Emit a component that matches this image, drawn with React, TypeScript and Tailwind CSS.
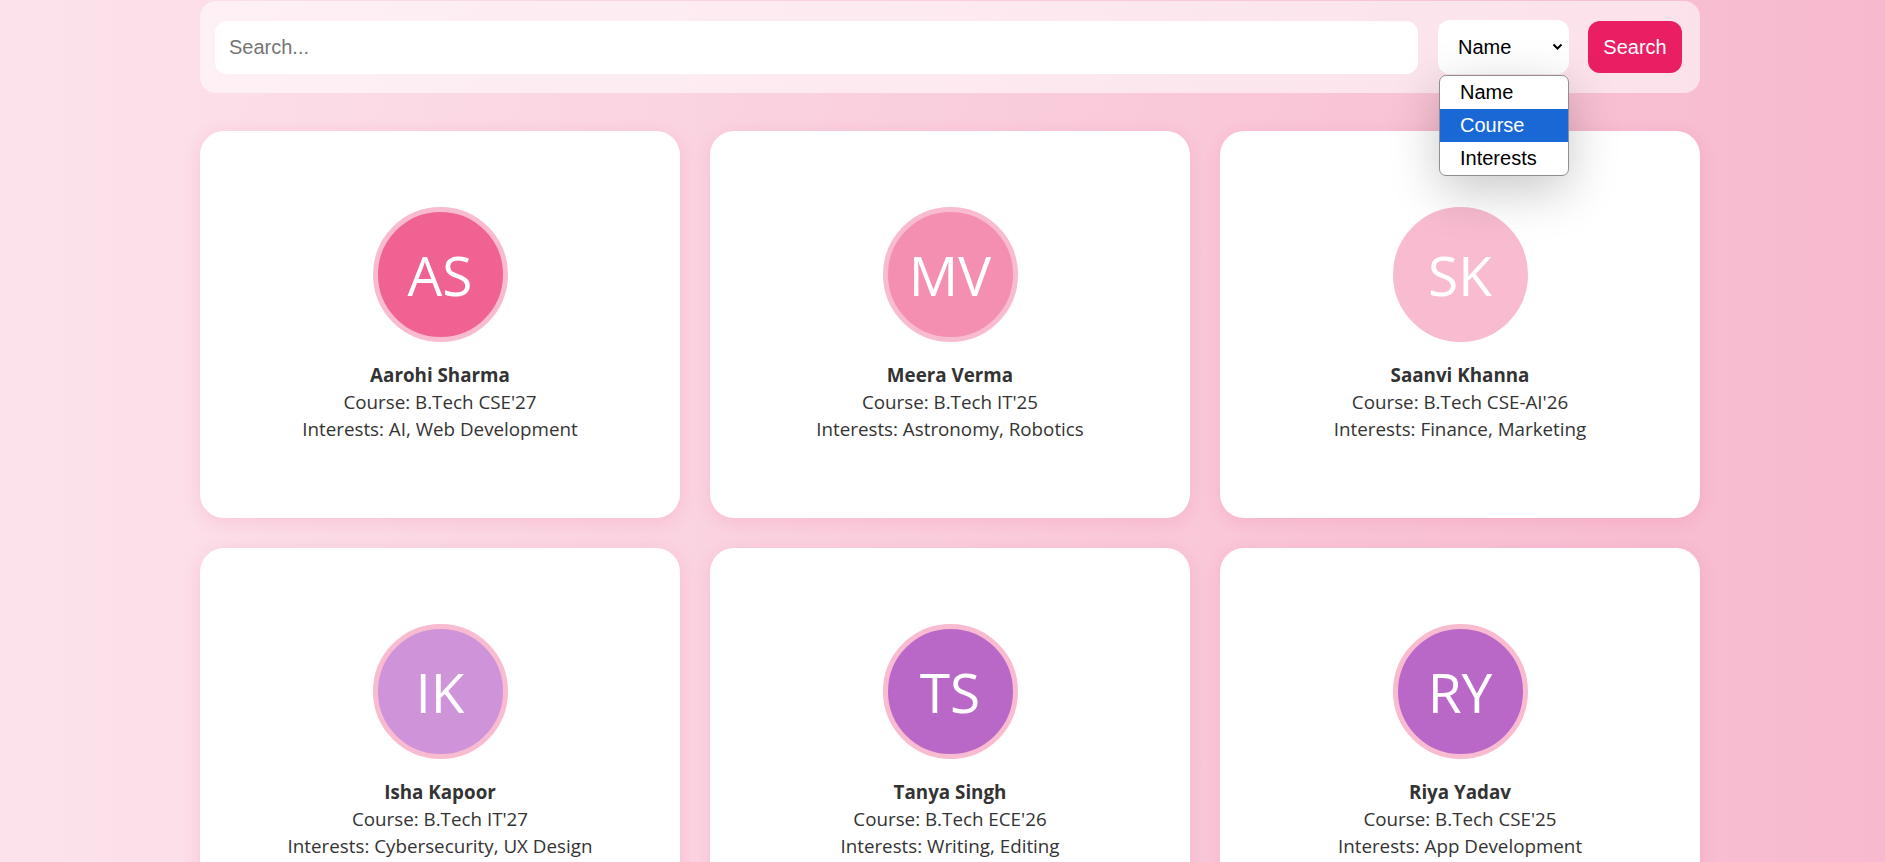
import { useState } from 'react';

type Student = {
  initials: string;
  name: string;
  course: string;
  interests: string;
  color: string;
};

const students: Student[] = [
  { initials: 'AS', name: 'Aarohi Sharma', course: "B.Tech CSE'27", interests: 'AI, Web Development', color: 'bg-[#f06292]' },
  { initials: 'MV', name: 'Meera Verma', course: "B.Tech IT'25", interests: 'Astronomy, Robotics', color: 'bg-[#f48fb1]' },
  { initials: 'SK', name: 'Saanvi Khanna', course: "B.Tech CSE-AI'26", interests: 'Finance, Marketing', color: 'bg-[#f8bbd0]' },
  { initials: 'IK', name: 'Isha Kapoor', course: "B.Tech IT'27", interests: 'Cybersecurity, UX Design', color: 'bg-[#ce93d8]' },
  { initials: 'TS', name: 'Tanya Singh', course: "B.Tech ECE'26", interests: 'Writing, Editing', color: 'bg-[#ba68c8]' },
  { initials: 'RY', name: 'Riya Yadav', course: "B.Tech CSE'25", interests: 'App Development', color: 'bg-[#ba68c8]' },
];

const options = ['Name', 'Course', 'Interests'];

const StudentCard = ({ s }: { s: Student }) => (
  <div className="flex flex-col items-center rounded-[24px] bg-white pt-[76px] pb-[75px] shadow-[0_4px_18px_rgba(233,30,99,0.12)]">
    <div
      className={`flex h-[135px] w-[135px] items-center justify-center rounded-full border-[5px] border-[#f8bbd0] ${s.color} text-[55px] leading-none text-white`}
    >
      {s.initials}
    </div>
    <div className="mt-[20px] text-center text-[18.8px] leading-[27px] text-[#333]">
      <p className="font-bold">{s.name}</p>
      <p>Course: {s.course}</p>
      <p>Interests: {s.interests}</p>
    </div>
  </div>
);

export default function App() {
  const [filter] = useState('Name');
  const [hovered, setHovered] = useState('Course');

  return (
    <div className="min-h-screen bg-linear-to-r from-[#fce3eb] to-[#f7b9ce] pt-px font-['Open_Sans',sans-serif]">
      <div className="mx-auto w-[1515px] pl-[15px]">
        {/* Search bar */}
        <div className="relative z-10 flex items-center gap-[20px] rounded-[16px] bg-white/55 py-[19px] pl-[15px] pr-[18px] font-['Liberation_Sans',Arial,sans-serif] text-[20px]">
          <input
            type="text"
            placeholder="Search..."
            className="h-[53px] flex-1 rounded-[12px] bg-white px-[14px] text-black placeholder:text-[#757575] outline-none"
          />
          <div className="relative">
            <select
              value={filter}
              onChange={() => {}}
              className="h-[54px] w-[131px] appearance-none rounded-[12px] bg-white pl-[20px] text-black outline-none"
            >
              {options.map((o) => (
                <option key={o}>{o}</option>
              ))}
            </select>
            <svg
              className="pointer-events-none absolute right-[6px] top-[23px]"
              width="11"
              height="8"
              viewBox="0 0 11 8"
            >
              <path d="M1.5 1.5 L5.5 5.5 L9.5 1.5" fill="none" stroke="#000" strokeWidth="2" />
            </svg>
            {/* open dropdown list */}
            <ul className="absolute left-[1px] top-[55px] w-[130px] overflow-hidden rounded-[7px] border border-[#8f8f8f] bg-white shadow-[0_14px_50px_rgba(0,0,0,0.22)]">
              {options.map((o) => (
                <li
                  key={o}
                  onMouseEnter={() => setHovered(o)}
                  className={`h-[33px] pl-[20px] leading-[33px] ${
                    hovered === o ? 'bg-[#1a67d6] text-white' : 'text-black'
                  }`}
                >
                  {o}
                </li>
              ))}
            </ul>
          </div>
          <button className="-ml-[1px] h-[52px] w-[94px] rounded-[12px] bg-[#e91e63] text-white">Search</button>
        </div>

        {/* Cards */}
        <div className="mt-[38px] grid grid-cols-3 gap-[30px] pb-[40px]">
          {students.map((s) => (
            <StudentCard key={s.name} s={s} />
          ))}
        </div>
      </div>
    </div>
  );
}
